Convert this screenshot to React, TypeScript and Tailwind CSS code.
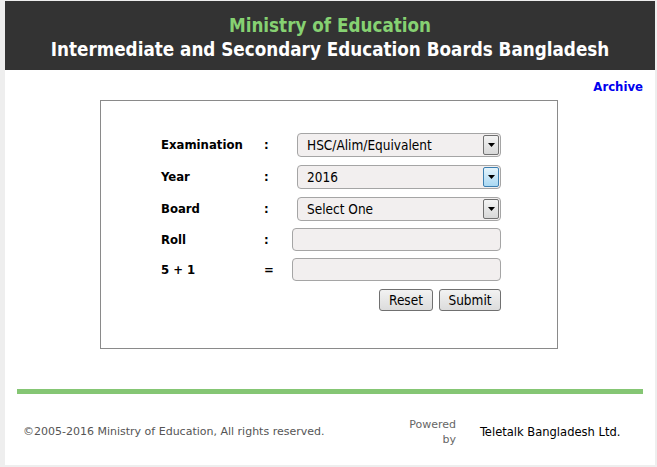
import * as React from "react";

const font = { fontFamily: '"DejaVu Sans Condensed", "DejaVu Sans", sans-serif' };
const wide = { fontFamily: '"DejaVu Sans", sans-serif' };

function Arrow({ active }: { active?: boolean }) {
  return (
    <span
      className={
        "absolute right-[1px] top-[1px] bottom-[1px] w-[16px] rounded-[2px] border flex items-center justify-center " +
        (active
          ? "border-[#3c7fb1] bg-gradient-to-b from-[#e5f4fc] to-[#a9d8f3]"
          : "border-[#707070] bg-gradient-to-b from-[#f4f4f4] to-[#d8d8d8]")
      }
    >
      <svg width="7" height="4" viewBox="0 0 7 4">
        <path d="M0 0h7L3.5 4z" fill="#000" />
      </svg>
    </span>
  );
}

function Select({ value, active }: { value: string; active?: boolean }) {
  return (
    <div className="relative w-[204px] h-[24px] rounded-[4px] border border-[#a5a5a5] bg-[#f2efef] flex items-center pl-[9px] text-[13.5px] text-black">
      {value}
      <Arrow active={active} />
    </div>
  );
}

function Row({
  label,
  sep,
  sepW,
  children,
  h,
}: {
  label: string;
  sep: string;
  sepW: string;
  children: React.ReactNode;
  h: string;
}) {
  return (
    <div className={"flex items-center " + h}>
      <span className="w-[103px] font-bold text-[13px] text-black">{label}</span>
      <span className={"font-bold text-[13px] text-black " + sepW}>{sep}</span>
      {children}
    </div>
  );
}

export default function App() {
  return (
    <div className="min-h-[467px] bg-[#eeeeee] pl-[5px] pt-[1px]" style={font}>
      <div className="w-[650px] h-[464px] bg-white flex flex-col">
        <div className="h-[69px] bg-[#333333] flex flex-col items-center justify-center gap-[2px] pt-[5px]">
          <div className="text-[#86d172] font-bold text-[18.7px] leading-[22px]">Ministry of Education</div>
          <div className="text-white font-bold text-[18.7px] leading-[22px]">
            Intermediate and Secondary Education Boards Bangladesh
          </div>
        </div>

        <div className="h-[30px] flex justify-end items-center pr-[12px] pt-[3px]">
          <a className="text-[#0000ee] font-bold text-[13px]">Archive</a>
        </div>

        <div className="ml-[95px] w-[458px] h-[249px] border border-[#8a8a8a] pt-[32px] pl-[60px]">
          <div className="flex flex-col gap-[8px]">
            <Row label="Examination" sep=":" sepW="w-[33px]" h="h-[24px]">
              <Select value="HSC/Alim/Equivalent" />
            </Row>
            <Row label="Year" sep=":" sepW="w-[33px]" h="h-[24px]">
              <Select value="2016" active />
            </Row>
            <Row label="Board" sep=":" sepW="w-[33px]" h="h-[24px]">
              <Select value="Select One" />
            </Row>
          </div>
          <div className="flex flex-col gap-[7px] mt-[7px]">
            <Row label="Roll" sep=":" sepW="w-[28px]" h="h-[23px]">
              <input className="w-[209px] h-[23px] rounded-[4px] border border-[#a5a5a5] bg-[#f2efef] outline-none" />
            </Row>
            <Row label="5 + 1" sep="=" sepW="w-[28px]" h="h-[23px]">
              <input className="w-[209px] h-[23px] rounded-[4px] border border-[#a5a5a5] bg-[#f2efef] outline-none" />
            </Row>
          </div>
          <div className="flex w-[340px] justify-end gap-[6px] mt-[8px]">
            <button className="w-[54px] h-[22px] rounded-[3px] border border-[#707070] bg-gradient-to-b from-[#f2f2f2] to-[#dcdcdc] text-[13.5px] text-black">
              Reset
            </button>
            <button className="w-[62px] h-[22px] rounded-[3px] border border-[#707070] bg-gradient-to-b from-[#f2f2f2] to-[#dcdcdc] text-[13.5px] text-black">
              Submit
            </button>
          </div>
        </div>

        <div className="mt-[40px] ml-[12px] w-[626px] h-[5px] bg-[#85c674]" />

        <div className="flex items-center mt-[23px] pl-[18px]">
          <div className="w-[340px] text-[11px] text-[#555555]" style={wide}>
            ©2005-2016 Ministry of Education, All rights reserved.
          </div>
          <div className="w-[93px] text-right text-[11px] text-[#666666] leading-[15px]" style={wide}>
            Powered
            <br />
            by
          </div>
          <div className="ml-[24px] text-[12.8px] text-black">Teletalk Bangladesh Ltd.</div>
        </div>
      </div>
    </div>
  );
}
